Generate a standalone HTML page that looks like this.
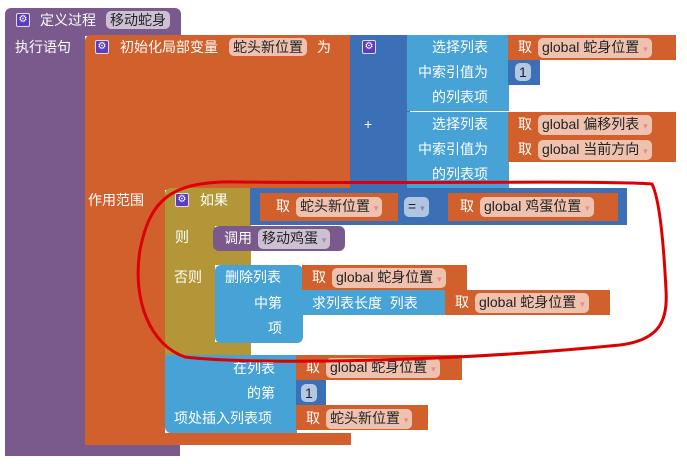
<!DOCTYPE html>
<html><head><meta charset="utf-8"><style>
body{margin:0;width:687px;height:464px;background:#fff;position:relative;overflow:hidden;font-family:"Liberation Sans","Noto Sans CJK SC",sans-serif;font-size:14px;color:#fff}
div{position:absolute;box-sizing:border-box}
.p{background:#7a5a8c}.o{background:#d2602c}.m{background:#b39638}.b{background:#3b6fb6}.lb{background:#47a2d6}
.t{white-space:nowrap;line-height:18px}
.f{border-radius:5px;background:rgba(255,255,255,.62);color:#222;padding:0 4px;line-height:18px;white-space:nowrap}
.fp{border-radius:5px;background:rgba(255,255,255,.62);color:#222;padding:0 4px;line-height:18px;white-space:nowrap}
.g{width:14px;height:14px;background:#5b3dc4;border:1px solid #ddd;border-radius:2px;color:#fff;font-size:10px;line-height:12px;text-align:center}
.ar{color:#e88;font-size:9px}
</style></head><body>
<!-- procedure -->
<div class="p" style="left:5px;top:8px;width:176px;height:28px;border-radius:6px 6px 0 0"></div>
<div class="p" style="left:5px;top:35px;width:80px;height:420px"></div>
<div class="p" style="left:5px;top:445px;width:175px;height:11px"></div>
<div class="g" style="left:16px;top:13px">⚙</div>
<div class="t" style="left:40px;top:11px">定义过程</div>
<div class="fp" style="left:106px;top:11px">移动蛇身</div>
<div class="t" style="left:15px;top:38px">执行语句</div>
<!-- init local -->
<div class="o" style="left:85px;top:35px;width:266px;height:155px;border-radius:6px 0 0 0"></div>
<div class="o" style="left:85px;top:185px;width:80px;height:255px"></div>
<div class="o" style="left:85px;top:433px;width:266px;height:12px"></div>
<div class="g" style="left:95px;top:40px">⚙</div>
<div class="t" style="left:120px;top:38px">初始化局部变量</div>
<div class="f" style="left:229px;top:38px">蛇头新位置</div>
<div class="t" style="left:317px;top:38px">为</div>
<div class="t" style="left:88px;top:191px">作用范围</div>
<!-- plus block -->
<div class="b" style="left:350px;top:35px;width:60px;height:155px"></div>
<div class="g" style="left:362px;top:40px">⚙</div>
<div class="t" style="left:364px;top:115px">+</div>
<div class="lb" style="left:407px;top:35px;width:102px;height:76px"></div>
<div class="lb" style="left:407px;top:112px;width:102px;height:76px"></div>
<div class="t" style="left:432px;top:38px">选择列表</div>
<div class="t" style="left:418px;top:63px">中索引值为</div>
<div class="t" style="left:432px;top:88px">的列表项</div>
<div class="t" style="left:432px;top:115px">选择列表</div>
<div class="t" style="left:418px;top:140px">中索引值为</div>
<div class="t" style="left:432px;top:165px">的列表项</div>
<div class="o" style="left:508px;top:35px;width:168px;height:25px"></div>
<div class="t" style="left:518px;top:38px">取</div><div class="f" style="left:538px;top:38px">global 蛇身位置 <span class="ar">▾</span></div>
<div class="b" style="left:508px;top:60px;width:32px;height:25px"></div>
<div class="f" style="left:515px;top:63px">1</div>
<div class="o" style="left:508px;top:112px;width:168px;height:25px"></div>
<div class="t" style="left:518px;top:115px">取</div><div class="f" style="left:538px;top:115px">global 偏移列表 <span class="ar">▾</span></div>
<div class="o" style="left:508px;top:137px;width:168px;height:25px"></div>
<div class="t" style="left:518px;top:140px">取</div><div class="f" style="left:538px;top:140px">global 当前方向 <span class="ar">▾</span></div>
<!-- if -->
<div class="m" style="left:165px;top:188px;width:86px;height:38px;border-radius:6px 0 0 0"></div>
<div class="m" style="left:165px;top:225px;width:50px;height:130px"></div>
<div class="m" style="left:165px;top:250px;width:86px;height:15px"></div>
<div class="m" style="left:165px;top:342px;width:86px;height:15px"></div>
<div class="g" style="left:175px;top:193px">⚙</div>
<div class="t" style="left:200px;top:191px">如果</div>
<div class="t" style="left:175px;top:228px">则</div>
<div class="t" style="left:174px;top:268px">否则</div>
<div class="b" style="left:250px;top:188px;width:377px;height:37px"></div>
<div class="o" style="left:260px;top:193px;width:138px;height:28px"></div>
<div class="t" style="left:276px;top:197px">取</div><div class="f" style="left:296px;top:197px">蛇头新位置 <span class="ar">▾</span></div>
<div class="fp" style="left:404px;top:197px;background:rgba(255,255,255,.6)">= <span style="font-size:9px;color:#88a">▾</span></div>
<div class="o" style="left:448px;top:193px;width:170px;height:28px"></div>
<div class="t" style="left:460px;top:197px">取</div><div class="f" style="left:480px;top:197px">global 鸡蛋位置 <span class="ar">▾</span></div>
<div class="p" style="left:213px;top:226px;width:132px;height:25px;border-radius:6px"></div>
<div class="t" style="left:224px;top:229px">调用</div><div class="fp" style="left:258px;top:229px">移动鸡蛋 <span style="font-size:9px;color:#a8a">▾</span></div>
<!-- delete -->
<div class="lb" style="left:215px;top:265px;width:88px;height:78px;border-radius:6px"></div>
<div class="t" style="left:225px;top:268px">删除列表</div>
<div class="t" style="left:254px;top:294px">中第</div>
<div class="t" style="left:268px;top:319px">项</div>
<div class="o" style="left:302px;top:265px;width:165px;height:25px"></div>
<div class="t" style="left:312px;top:268px">取</div><div class="f" style="left:332px;top:268px">global 蛇身位置 <span class="ar">▾</span></div>
<div class="lb" style="left:302px;top:290px;width:144px;height:25px"></div>
<div class="t" style="left:312px;top:294px">求列表长度 &nbsp;列表</div>
<div class="o" style="left:445px;top:290px;width:165px;height:25px"></div>
<div class="t" style="left:455px;top:293px">取</div><div class="f" style="left:475px;top:293px">global 蛇身位置 <span class="ar">▾</span></div>
<!-- insert -->
<div class="lb" style="left:165px;top:355px;width:132px;height:78px;border-radius:0 0 0 6px"></div>
<div class="t" style="left:233px;top:359px">在列表</div>
<div class="t" style="left:247px;top:384px">的第</div>
<div class="t" style="left:174px;top:409px">项处插入列表项</div>
<div class="o" style="left:296px;top:355px;width:166px;height:25px"></div>
<div class="t" style="left:306px;top:358px">取</div><div class="f" style="left:326px;top:358px">global 蛇身位置 <span class="ar">▾</span></div>
<div class="b" style="left:296px;top:380px;width:30px;height:25px"></div>
<div class="f" style="left:301px;top:384px">1</div>
<div class="o" style="left:296px;top:405px;width:132px;height:25px"></div>
<div class="t" style="left:306px;top:409px">取</div><div class="f" style="left:326px;top:409px">蛇头新位置 <span class="ar">▾</span></div>
<!-- red outline -->
<svg style="position:absolute;left:0;top:0" width="687" height="464"><path d="M240,182 C170,180 150,200 140,250 C132,300 150,345 185,357 C250,365 450,362 620,345 C660,340 668,320 666,290 C664,250 660,200 652,184 C600,180 400,184 240,182 Z" fill="none" stroke="#d00" stroke-width="3"/></svg>
</body></html>
